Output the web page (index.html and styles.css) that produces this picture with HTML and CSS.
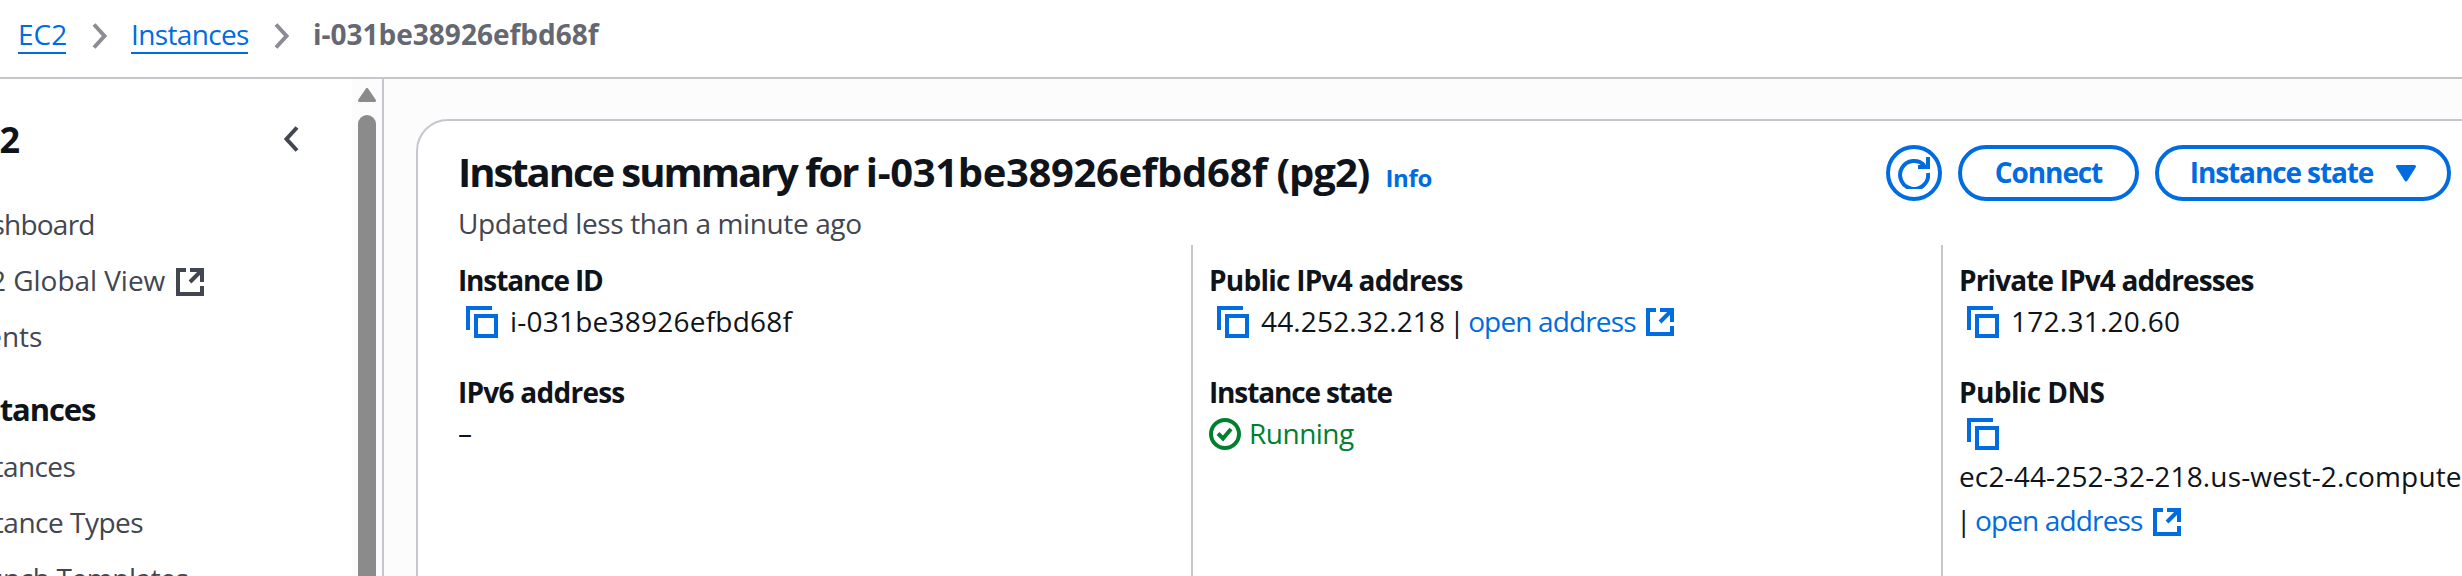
FILE: index.html
```html
<!DOCTYPE html>
<html lang="en">
<head>
<meta charset="utf-8">
<title>Instance details | EC2</title>
<link rel="stylesheet" href="styles.css">
</head>
<body>
<svg class="defs" width="0" height="0">
  <symbol id="copy" viewBox="0 0 32 32"><path d="M26 2H2V24M10 10H30V30H10Z"/></symbol>
  <symbol id="external" viewBox="0 0 28 28"><path d="M10 2H2V26H26V18M14 2H26V14M14 14L26 2"/></symbol>
</svg>
<header class="topbar">
  <nav class="breadcrumbs">
    <a class="crumb crumb-root">EC2</a>
    <svg class="sep" width="16" height="26" viewBox="0 0 16 26"><path d="M2 1.5L12.5 13L2 24.5"/></svg>
    <a class="crumb crumb-list">Instances</a>
    <svg class="sep" width="16" height="26" viewBox="0 0 16 26"><path d="M2 1.5L12.5 13L2 24.5"/></svg>
    <span class="crumb-current">i-031be38926efbd68f</span>
  </nav>
</header>
<div class="layout">
  <aside class="side">
    <div class="side-content">
      <div class="side-head">
        <span class="side-title">EC2</span>
        <svg class="collapse" width="16" height="26" viewBox="0 0 16 26"><path d="M14 1.5L3.5 13L14 24.5"/></svg>
      </div>
      <ul class="side-list">
        <li class="dash">Dashboard</li>
        <li class="global">EC2 Global View <svg class="icon ext"><use href="#external"/></svg></li>
        <li class="events">Events</li>
      </ul>
      <div class="side-section">Instances</div>
      <ul class="side-list">
        <li>Instances</li>
        <li class="types">Instance Types</li>
        <li class="templates">Launch Templates</li>
      </ul>
    </div>
    <div class="scrollbar">
      <svg width="18" height="14" viewBox="0 0 18 14"><path d="M9 1.5L16.5 12.5H1.5Z"/></svg>
      <div class="thumb"></div>
    </div>
  </aside>
  <main class="main">
    <section class="card">
      <div class="card-head">
        <h1 class="title"><span class="title-lead">Instance summary for </span><span class="title-id">i-031be38926efbd68f</span> (pg2)</h1>
        <a class="info">Info</a>
        <div class="actions">
          <button class="btn btn-refresh"><svg width="32" height="32" viewBox="0 0 32 32"><path d="M30 0V10H20M30 16A14 14 0 1 1 26.500 8.500"/></svg></button>
          <button class="btn btn-connect">Connect</button>
          <button class="btn btn-state"><span>Instance state</span><svg width="20" height="17" viewBox="0 0 20 17"><path d="M1.500 1.500H18.500L10 15Z"/></svg></button>
        </div>
      </div>
      <p class="desc">Updated less than a minute ago</p>
      <div class="cols">
        <div class="col col-first">
          <div class="field">
            <div class="label id-label">Instance ID</div>
            <div class="value"><svg class="icon copy"><use href="#copy"/></svg><span class="id-value">i-031be38926efbd68f</span></div>
          </div>
          <div class="field">
            <div class="label">IPv6 address</div>
            <div class="value">–</div>
          </div>
        </div>
        <div class="col">
          <div class="field">
            <div class="label">Public IPv4 address</div>
            <div class="value"><svg class="icon copy"><use href="#copy"/></svg><span class="ip">44.252.32.218</span><span class="bar">|</span><a class="link">open address</a><svg class="icon ext blue"><use href="#external"/></svg></div>
          </div>
          <div class="field">
            <div class="label id-label">Instance state</div>
            <div class="value running"><svg class="check" width="32" height="32" viewBox="0 0 32 32"><circle cx="16" cy="16" r="14"/><path d="M9 15.500L14 20.500L22 11"/></svg><span>Running</span></div>
          </div>
        </div>
        <div class="col">
          <div class="field">
            <div class="label private">Private IPv4 addresses</div>
            <div class="value"><svg class="icon copy"><use href="#copy"/></svg><span class="ip private-ip">172.31.20.60</span></div>
          </div>
          <div class="field">
            <div class="label dns">Public DNS</div>
            <div class="value"><svg class="icon copy"><use href="#copy"/></svg></div>
            <div class="dns-name">ec2-44-252-32-218.us-west-2.compute.amazonaws.com</div>
            <div class="dns-link"><span class="bar">|</span><a class="link">open address</a><svg class="icon ext blue"><use href="#external"/></svg></div>
          </div>
        </div>
      </div>
    </section>
  </main>
</div>
</body>
</html>
```
FILE: styles.css
```css
* { box-sizing: border-box; }
body {
  margin: 0;
  height: 576px;
  overflow: hidden;
  display: flex;
  flex-direction: column;
  background: #fff;
  color: #0f141a;
  font: 28px/40px "Open Sans", "Noto Sans", sans-serif;
  white-space: nowrap;
}
.defs { display: none; }
svg { flex: none; fill: none; stroke-width: 4; }
ul { list-style: none; margin: 0; padding: 0; }

.topbar { flex: none; height: 79px; border-bottom: 2px solid #c6c6cd; }
.breadcrumbs { display: flex; padding: 16px 0 0 18px; line-height: 36px; }
.crumb { color: #006ce0; border-bottom: 2px solid #006ce0; }
.crumb-root { width: 48px; }
.crumb-list { width: 117px; letter-spacing: -0.65px; }
.sep { margin: 7px 23px 0 26px; stroke: #8c8c94; }
.crumb-current { color: #656871; font-weight: 700; }

.layout { flex: 1; display: flex; min-height: 0; }
.side {
  flex: none;
  width: 384px;
  display: flex;
  overflow: hidden;
  border-right: 2px solid #c6c6cd;
  color: #424650;
}
.side-content { width: 395px; margin-left: -43px; flex: none; }
.side-head {
  display: flex;
  align-items: center;
  justify-content: space-between;
  height: 56px;
  margin: 32px 53px 29px 0;
}
.side-title { padding-top: 1px; font-size: 36px; font-weight: 700; color: #0f141a; letter-spacing: -0.3px; }
.collapse { stroke: #424650; }
.side-list li { display: flex; align-items: center; height: 56px; letter-spacing: -0.6px; }
.side-list .dash { letter-spacing: -0.75px; }
.side-list .global { letter-spacing: -0.05px; }
.side-list .events { letter-spacing: -0.1px; }
.side-list .types { letter-spacing: -0.5px; }
.side-list .templates { letter-spacing: -0.42px; }
.side-list .ext { margin: 4px 0 0 11px; }
.side-section {
  height: 74px;
  padding-top: 18px;
  line-height: 54px;
  font-size: 31px;
  font-weight: 700;
  color: #0f141a;
  letter-spacing: -1.1px;
}
.scrollbar { width: 30px; flex: none; padding: 9px 6px 0; background: #fcfcfc; display: flex; flex-direction: column; }
.scrollbar svg { fill: #8b8b8b; stroke: #8b8b8b; stroke-width: 3; stroke-linejoin: round; }
.thumb { flex: 1; margin-top: 13px; border-radius: 9px 9px 0 0; background: #8b8b8b; }

.main { flex: 1; min-width: 0; overflow: hidden; padding: 40px 0 0 32px; background: #fcfcfd; }
.card {
  width: 2120px;
  height: 900px;
  padding: 24px 40px;
  border: 2px solid #c6c6cd;
  border-radius: 32px;
  background: #fff;
}
.card-head { display: flex; width: 1993px; height: 56px; }
.title { margin: 0; font-size: 40px; line-height: 54px; font-weight: 700; letter-spacing: -1px; }
.title-lead { letter-spacing: -2.05px; }
.title-id { letter-spacing: -0.35px; }
.info { margin-left: 16px; font-size: 24px; line-height: 66px; font-weight: 700; color: #006ce0; letter-spacing: -0.3px; }
.actions { display: flex; gap: 16px; margin-left: auto; }
.btn {
  display: flex;
  align-items: center;
  justify-content: center;
  height: 56px;
  padding: 0;
  border: 4px solid #006ce0;
  border-radius: 28px;
  background: #fff;
  color: #006ce0;
  font: 700 28px/48px "Open Sans", "Noto Sans", sans-serif;
  letter-spacing: -1.1px;
}
.btn svg { stroke: #006ce0; }
.btn-refresh { width: 56px; }
.btn-connect { width: 181px; padding-bottom: 2px; }
.btn-state { width: 296px; gap: 23px; }
.btn-state span { padding-bottom: 2px; }
.btn-state svg { fill: #006ce0; stroke-width: 3; stroke-linejoin: round; }
.desc { margin: 4px 0; line-height: 36px; color: #424650; letter-spacing: -0.38px; }

.cols { display: flex; height: 700px; }
.col { flex: none; width: 750px; padding: 15px 0 0 16px; border-left: 2px solid #c6c6cd; }
.col-first { width: 733px; padding-left: 0; border-left: 0; }
.field { margin-bottom: 32px; }
.label { font-weight: 700; letter-spacing: -0.75px; line-height: 41px; height: 40px; }
.id-label { letter-spacing: -1.15px; }
.private { letter-spacing: -0.87px; }
.dns { letter-spacing: -0.6px; }
.value, .dns-link { display: flex; align-items: center; height: 40px; }
.value { line-height: 40px; }
.value span, .value a { padding-top: 1px; }
.icon { stroke: #006ce0; }
.copy { width: 32px; height: 32px; margin: 4px 12px 0 8px; }
.ext { width: 28px; height: 28px; margin: 4px 0 0 10px; }
.side .ext { stroke: #424650; }
.id-value { letter-spacing: 0.23px; }
.ip { letter-spacing: 0.15px; }
.private-ip { letter-spacing: 0.25px; }
.bar { width: 14px; margin-left: 4px; }
.link { margin-left: 5px; color: #006ce0; letter-spacing: -0.86px; }
.running { color: #00802f; letter-spacing: -0.5px; }
.check { margin: 4px 8px 0 0; stroke: #00802f; }
.dns-name { margin-top: 2px; line-height: 44px; letter-spacing: 0.15px; }
.dns-link { height: 44px; }
.dns-link .bar { margin-left: -3px; }
```
